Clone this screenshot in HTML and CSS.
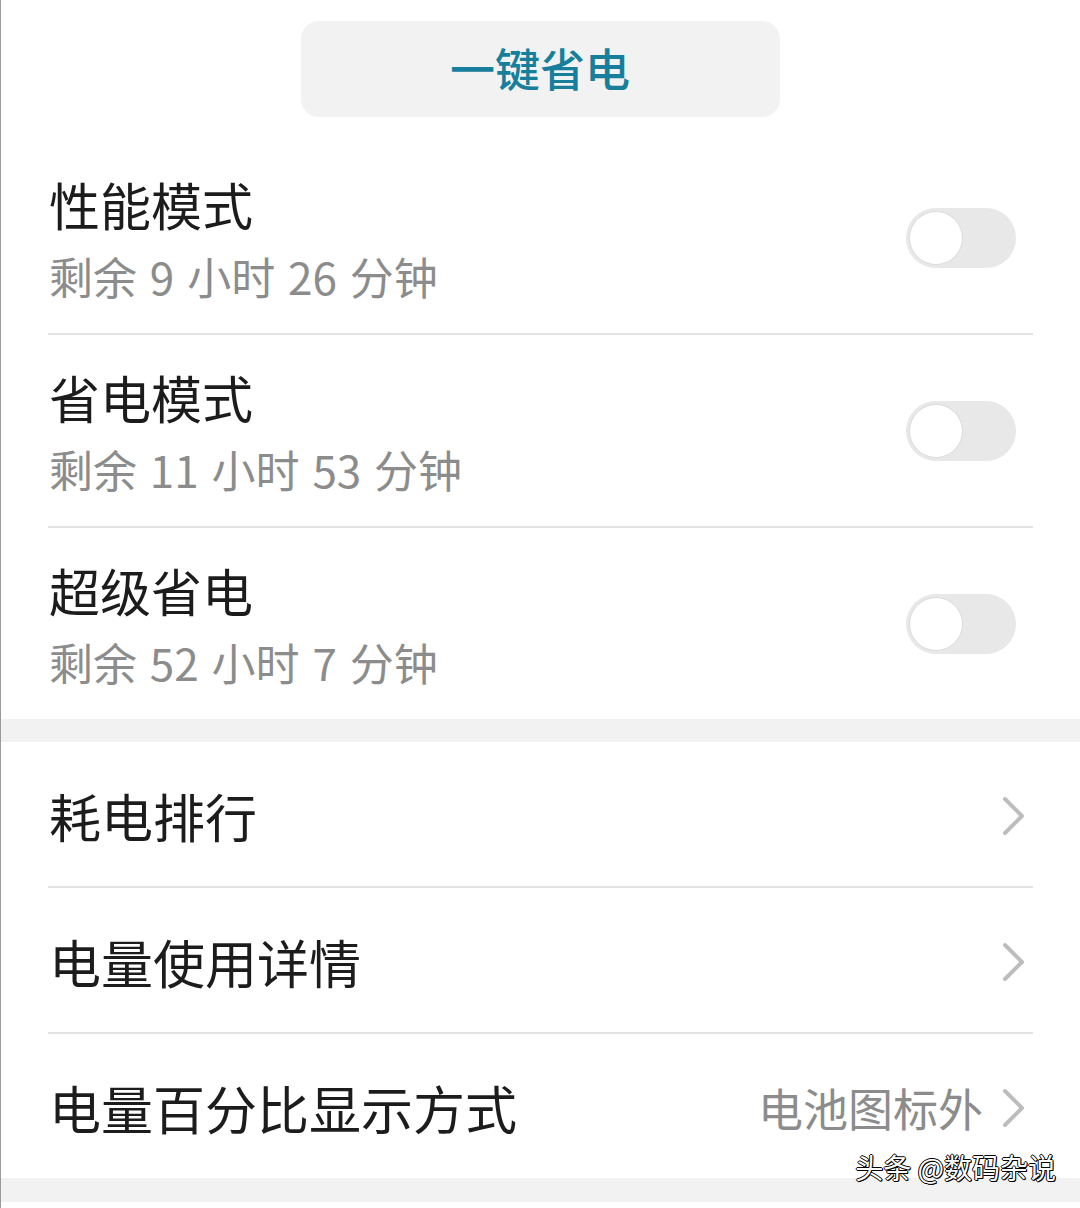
FILE: index.html
```html
<!DOCTYPE html>
<html lang="zh-CN">
<head>
<meta charset="utf-8">
<title>电池</title>
<link rel="stylesheet" href="styles.css">
</head>
<body>
<div class="page">
  <div class="top">
    <div class="save-btn">一键省电</div>
  </div>
  <div class="group modes">
    <div class="row mode">
      <div class="texts">
        <div class="title">性能模式</div>
        <div class="sub">剩余 9 小时 26 分钟</div>
      </div>
      <div class="toggle"><span class="knob"></span></div>
    </div>
    <div class="row mode">
      <div class="texts">
        <div class="title">省电模式</div>
        <div class="sub">剩余 11 小时 53 分钟</div>
      </div>
      <div class="toggle"><span class="knob"></span></div>
    </div>
    <div class="row mode last">
      <div class="texts">
        <div class="title">超级省电</div>
        <div class="sub">剩余 52 小时 7 分钟</div>
      </div>
      <div class="toggle"><span class="knob"></span></div>
    </div>
  </div>
  <div class="band"></div>
  <div class="group">
    <div class="row nav">
      <div class="title">耗电排行</div>
      <svg class="chev" width="26" height="40" viewBox="0 0 26 40"><path d="M4 3 L21 20 L4 37" fill="none" stroke="#bdbdbd" stroke-width="4" stroke-linecap="round" stroke-linejoin="round"/></svg>
    </div>
    <div class="row nav">
      <div class="title">电量使用详情</div>
      <svg class="chev" width="26" height="40" viewBox="0 0 26 40"><path d="M4 3 L21 20 L4 37" fill="none" stroke="#bdbdbd" stroke-width="4" stroke-linecap="round" stroke-linejoin="round"/></svg>
    </div>
    <div class="row nav last">
      <div class="title">电量百分比显示方式</div>
      <div class="right">
        <span class="value">电池图标外</span>
        <svg class="chev" width="26" height="40" viewBox="0 0 26 40"><path d="M4 3 L21 20 L4 37" fill="none" stroke="#bdbdbd" stroke-width="4" stroke-linecap="round" stroke-linejoin="round"/></svg>
      </div>
    </div>
  </div>
  <div class="band bottom"></div>
  <div class="watermark">头条 @数码杂说</div>
</div>
</body>
</html>
```
FILE: styles.css
```css
html, body {
  margin: 0;
  padding: 0;
  background: #ffffff;
}
body {
  font-family: "Noto Sans CJK SC", "Noto Sans", sans-serif;
}
.page {
  position: relative;
  width: 1079px;
  height: 1208px;
  border-left: 1px solid #9a9a9a;
  overflow: hidden;
}
.top {
  padding-top: 21px;
  display: flex;
  justify-content: center;
  margin-left: -1px;
}
.save-btn {
  width: 479px;
  height: 96px;
  background: #f2f2f2;
  border-radius: 18px;
  display: flex;
  align-items: center;
  justify-content: center;
  color: #177f9b;
  font-size: 45px;
  line-height: 56px;
  padding-bottom: 3px;
  box-sizing: border-box;
  font-weight: 500;
}
.group {
  margin: 0 47px 0 47px;
}
.group.modes {
  margin-top: 25px;
}
.row {
  display: flex;
  align-items: center;
  justify-content: space-between;
  border-bottom: 2px solid #e3e3e3;
  box-sizing: border-box;
}
.row.last {
  border-bottom: none;
}
.mode {
  height: 193px;
}
.mode.last {
  height: 191px;
}
.texts {
  align-self: flex-start;
  padding-top: 31px;
}
.title {
  font-size: 51px;
  line-height: 62px;
  color: #1c1c1c;
  padding-left: 1px;
}
.sub {
  font-size: 44px;
  line-height: 56px;
  color: #8c8c8c;
  margin-top: 13px;
  padding-left: 1px;
  word-spacing: 3px;
}
.toggle {
  width: 110px;
  height: 60px;
  border-radius: 30px;
  background: #e8e8e8;
  margin-right: 17px;
  margin-top: 1px;
  position: relative;
  box-sizing: border-box;
}
.knob {
  position: absolute;
  left: 4px;
  top: 4px;
  width: 52px;
  height: 52px;
  border-radius: 50%;
  background: #ffffff;
  box-shadow: 0 0 0 1px #dcdcdc;
}
.band {
  height: 23px;
  background: #f2f2f2;
  margin-left: -1px;
}
.band.bottom {
  height: 24px;
}
.nav {
  height: 146px;
  padding-top: 4px;
}
.nav.last {
  height: 144px;
}
.nav .title {
  font-size: 52px;
  line-height: 62px;
}
.chev {
  display: block;
  margin-right: 6px;
}
.right {
  display: flex;
  align-items: center;
  gap: 18px;
}
.value {
  font-size: 45px;
  color: #8c8c8c;
  line-height: 60px;
}
.watermark {
  position: absolute;
  right: 24px;
  top: 1147px;
  font-size: 28px;
  line-height: 40px;
  color: #ffffff;
  text-shadow: 1px 1px 0 #000, -1px 0 0 #000, 0 -1px 0 #000, 1px 0 0 #000, 0 1px 0 #000;
}
```
